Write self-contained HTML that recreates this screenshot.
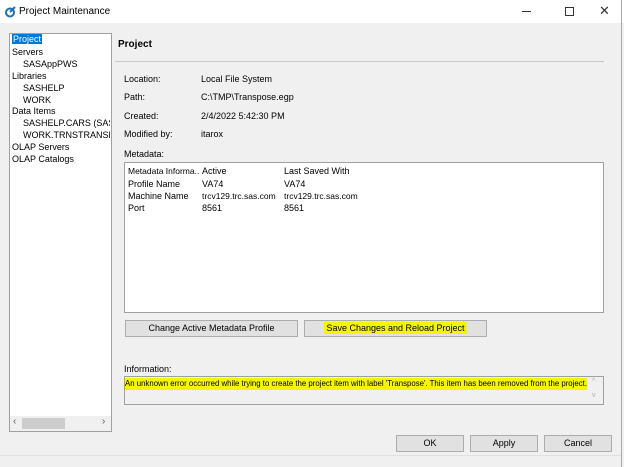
<!DOCTYPE html><html><head><style>
body{margin:0;width:624px;height:467px;overflow:hidden;background:#f0f0f0;font-family:"Liberation Sans",sans-serif;font-size:9px;color:#000;position:relative}
div,span{position:absolute;box-sizing:border-box}
.t{white-space:nowrap}
.btn{background:#e1e1e1;border:1px solid #adadad;text-align:center;line-height:15px;font-size:9px}
.hl{background:#f5f500}
</style></head><body>
<div style="left:0;top:0;width:624px;height:23px;background:#fff"></div>
<svg style="position:absolute;left:4px;top:6px" width="12" height="12" viewBox="0 0 12 12"><circle cx="6" cy="6.5" r="4" fill="none" stroke="#1a6fc4" stroke-width="2"/><path d="M6 6 L11 1" stroke="#1a6fc4" stroke-width="2"/></svg>
<div class="t" style="left:19px;top:6px;font-size:10px">Project Maintenance</div>
<div style="left:522px;top:11px;width:9px;height:1px;background:#333"></div>
<div style="left:565px;top:7px;width:9px;height:9px;border:1px solid #333"></div>
<div class="t" style="left:599px;top:3px;font-size:13px;color:#333">✕</div>
<div style="left:621px;top:0;width:1px;height:467px;background:#aaa"></div>
<div style="left:9px;top:33px;width:103px;height:399px;background:#fff;border:1px solid #a0a0a0"></div>
<div class="t" style="left:12px;top:34px;background:#0078d7;color:#fff;padding:0 1px">Project</div>
<div class="t" style="left:12px;top:47px">Servers</div>
<div class="t" style="left:23px;top:59px">SASAppPWS</div>
<div class="t" style="left:12px;top:71px">Libraries</div>
<div class="t" style="left:23px;top:83px">SASHELP</div>
<div class="t" style="left:23px;top:95px">WORK</div>
<div class="t" style="left:12px;top:106px">Data Items</div>
<div class="t" style="left:23px;top:118px;width:87px;overflow:hidden">SASHELP.CARS (SASAPP</div>
<div class="t" style="left:23px;top:130px;width:87px;overflow:hidden">WORK.TRNSTRANSPOSE</div>
<div class="t" style="left:12px;top:142px">OLAP Servers</div>
<div class="t" style="left:12px;top:154px">OLAP Catalogs</div>
<div style="left:10px;top:416px;width:101px;height:15px;background:#f0f0f0"></div>
<div style="left:22px;top:418px;width:43px;height:11px;background:#cdcdcd"></div>
<div class="t" style="left:13px;top:416px;font-size:10px;color:#555">‹</div>
<div class="t" style="left:102px;top:416px;font-size:10px;color:#555">›</div>
<div class="t" style="left:118px;top:39px;font-weight:bold;font-size:10px">Project</div>
<div style="left:115px;top:61px;width:489px;height:1px;background:#c8c8c8"></div>
<div class="t" style="left:124px;top:74px">Location:</div><div class="t" style="left:201px;top:74px">Local File System</div>
<div class="t" style="left:124px;top:92px">Path:</div><div class="t" style="left:201px;top:92px">C:\TMP\Transpose.egp</div>
<div class="t" style="left:124px;top:111px">Created:</div><div class="t" style="left:201px;top:111px">2/4/2022 5:42:30 PM</div>
<div class="t" style="left:124px;top:129px">Modified by:</div><div class="t" style="left:201px;top:129px">itarox</div>
<div class="t" style="left:124px;top:149px">Metadata:</div>
<div style="left:124px;top:162px;width:480px;height:151px;background:#fff;border:1px solid #a0a0a0"></div>
<div class="t" style="left:128px;top:166px;width:72px;overflow:hidden;font-size:8.5px">Metadata Informa...</div>
<div class="t" style="left:202px;top:166px">Active</div><div class="t" style="left:284px;top:166px">Last Saved With</div>
<div class="t" style="left:128px;top:179px">Profile Name</div><div class="t" style="left:202px;top:179px">VA74</div><div class="t" style="left:284px;top:179px">VA74</div>
<div class="t" style="left:128px;top:191px">Machine Name</div><div class="t" style="left:202px;top:191px;font-size:8.5px">trcv129.trc.sas.com</div><div class="t" style="left:284px;top:191px;font-size:8.5px">trcv129.trc.sas.com</div>
<div class="t" style="left:128px;top:203px">Port</div><div class="t" style="left:202px;top:203px">8561</div><div class="t" style="left:284px;top:203px">8561</div>
<div class="btn" style="left:125px;top:320px;width:173px;height:17px">Change Active Metadata Profile</div>
<div class="btn" style="left:304px;top:320px;width:183px;height:17px"><span class="hl" style="position:static;padding:1px 2px">Save Changes and Reload Project</span></div>
<div class="t" style="left:124px;top:364px">Information:</div>
<div style="left:124px;top:376px;width:480px;height:29px;background:#f0f0f0;border:1px solid #a0a0a0"></div>
<div class="t hl" style="left:125px;top:378px;font-size:8.6px;height:12px;transform:scaleX(0.91);transform-origin:0 0">An unknown error occurred while trying to create the project item with label 'Transpose'. This item has been removed from the project.</div>
<div class="t" style="left:592px;top:378px;font-size:7px;color:#aaa">^</div>
<div class="t" style="left:592px;top:392px;font-size:7px;color:#aaa">v</div>
<div class="btn" style="left:396px;top:435px;width:68px;height:17px">OK</div>
<div class="btn" style="left:470px;top:435px;width:68px;height:17px">Apply</div>
<div class="btn" style="left:544px;top:435px;width:68px;height:17px">Cancel</div>
<div style="left:0;top:455px;width:621px;height:1px;background:#e0e0e0"></div>
</body></html>
